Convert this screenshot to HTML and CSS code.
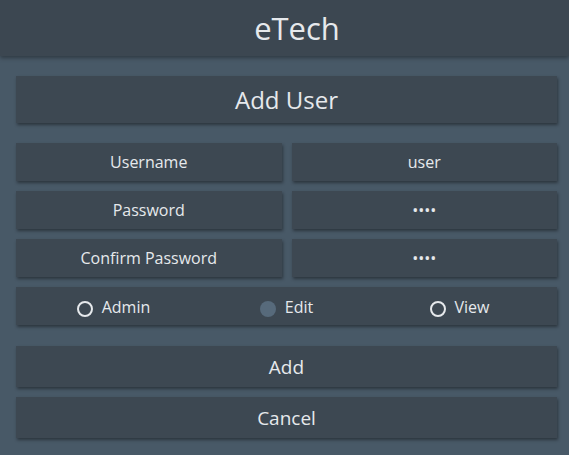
FILE: index.html
```html
<!DOCTYPE html>
<html lang="en">
<head>
<meta charset="utf-8">
<title>eTech</title>
<link rel="stylesheet" href="styles.css">
</head>
<body>
<header class="app-header">eTech</header>
<main class="content">
  <div class="card title-card">Add User</div>
  <div class="form-grid">
    <div class="card field">Username</div>
    <div class="card field">user</div>
    <div class="card field">Password</div>
    <div class="card field">••••</div>
    <div class="card field">Confirm Password</div>
    <div class="card field">••••</div>
  </div>
  <div class="card radio-row">
    <label class="radio"><span class="radio-dot"></span><span>Admin</span></label>
    <label class="radio"><span class="radio-dot filled"></span><span>Edit</span></label>
    <label class="radio"><span class="radio-dot"></span><span>View</span></label>
  </div>
  <div class="actions">
    <div class="card action">Add</div>
    <div class="card action">Cancel</div>
  </div>
</main>
</body>
</html>
```

FILE: styles.css
```css
html, body {
  margin: 0;
  padding: 0;
}

body {
  width: 569px;
  height: 455px;
  overflow: hidden;
  background: #485967;
  font-family: "Open Sans", "Liberation Sans", sans-serif;
  color: #e6e9ec;
}

.app-header {
  height: 56px;
  line-height: 56px;
  padding-left: 25px;
  text-align: center;
  font-size: 31px;
  background: #3c4751;
  box-shadow: 0 2px 4px rgba(0, 0, 0, 0.35);
  position: relative;
}

.content {
  padding: 20px 12px 0 16px;
  display: flex;
  flex-direction: column;
}

.card {
  box-sizing: border-box;
  background: #3d4852;
  box-shadow: 1px 2px 3px rgba(0, 0, 0, 0.4);
  text-align: center;
}

.title-card {
  height: 47px;
  line-height: 47px;
  font-size: 24px;
}

.form-grid {
  margin-top: 20px;
  display: grid;
  grid-template-columns: 1fr 1fr;
  column-gap: 10px;
  row-gap: 10px;
}

.field {
  height: 38px;
  padding-top: 1px;
  line-height: 37px;
  font-size: 16px;
}

.radio-row {
  margin-top: 10px;
  height: 38px;
  padding: 2px 11px 0;
  display: grid;
  grid-template-columns: 1fr 1fr 1fr;
  align-items: center;
  font-size: 16px;
}

.radio {
  display: flex;
  align-items: center;
  justify-content: center;
  gap: 9px;
}

.radio-dot {
  width: 16px;
  height: 16px;
  box-sizing: border-box;
  border: 2px solid #e6e9ec;
  border-radius: 50%;
  margin-top: 3px;
}

.radio-dot.filled {
  border: none;
  background: #576a7b;
}

.actions {
  margin-top: 21px;
  display: flex;
  flex-direction: column;
  gap: 10px;
}

.action {
  height: 41px;
  padding-top: 1px;
  line-height: 40px;
  font-size: 19px;
}
```
